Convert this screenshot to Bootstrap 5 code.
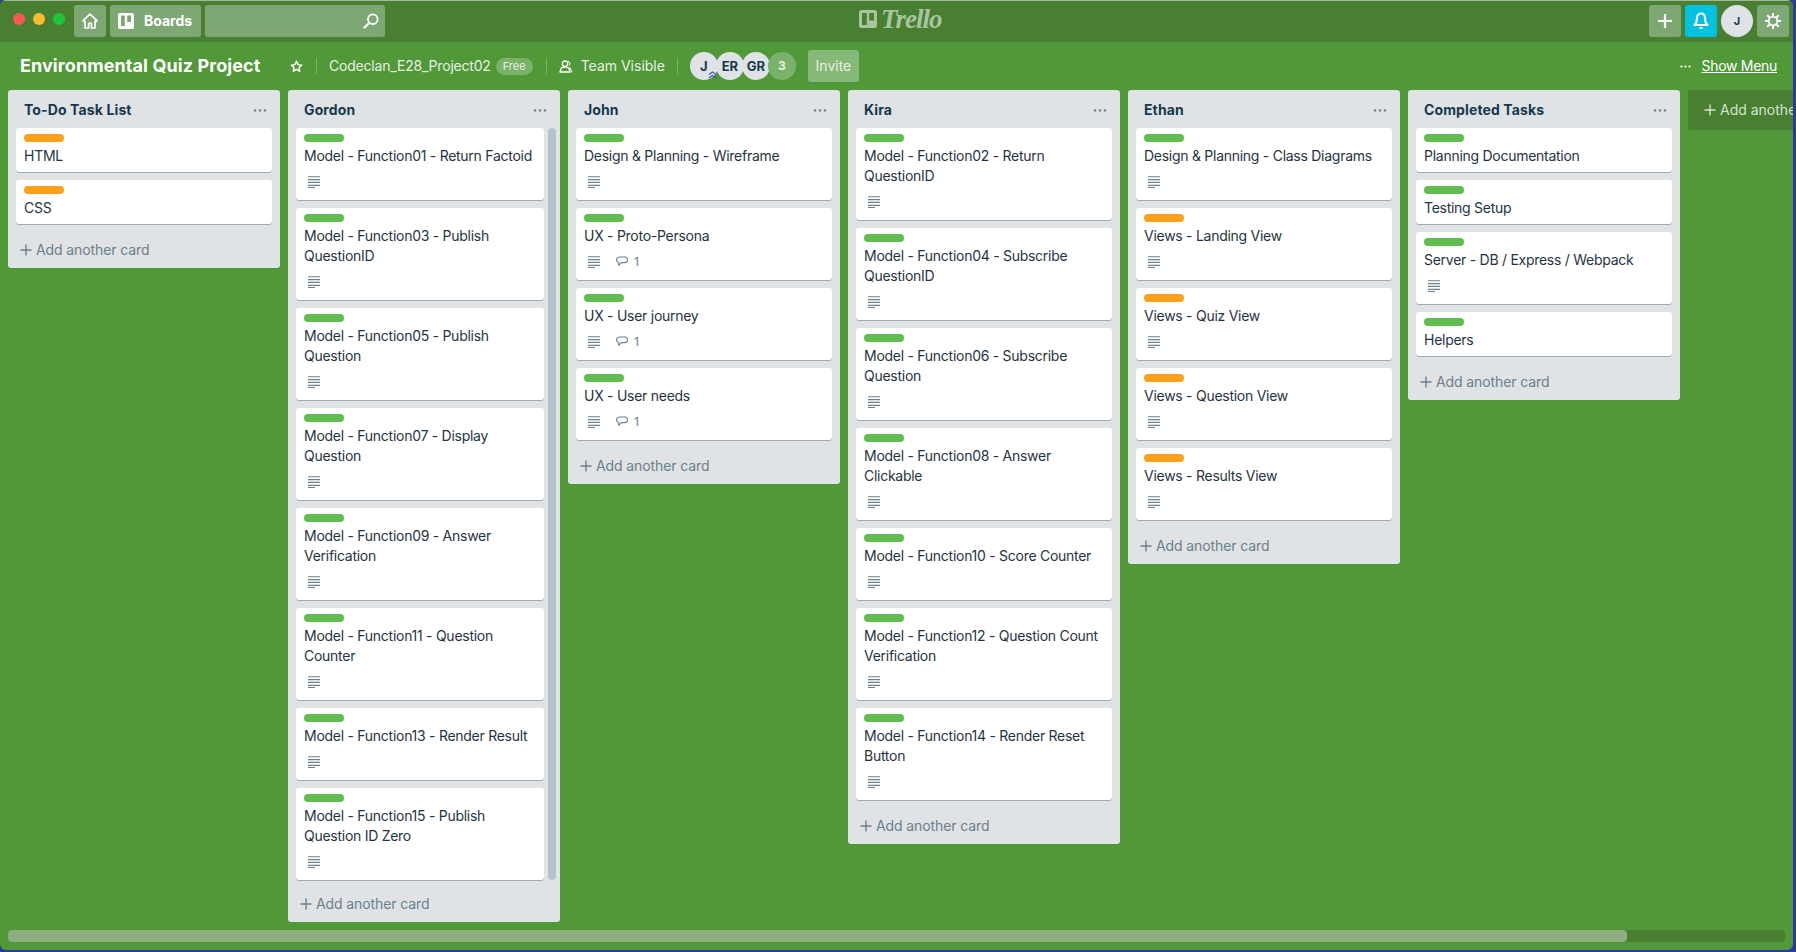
<!DOCTYPE html>
<html lang="en">
<head>
<meta charset="utf-8">
<title>Environmental Quiz Project | Trello</title>
<link href="https://cdn.jsdelivr.net/npm/bootstrap@5.3.0/dist/css/bootstrap.min.css" rel="stylesheet">
<style>
html,body{height:952px;width:1796px;overflow:hidden}
body{background:#2b3a9c;font-family:"Inter","Noto Sans",sans-serif;font-size:14px;line-height:20px;color:#17394d}
svg{display:block;flex:none}
.win{width:1793px;height:950px;background:#519839;border-radius:6px;overflow:hidden}
.topbar{height:42px;background:#487f31;border-top:1px solid #a3b79b;padding:4px 4px 0 13px}
.tdot{width:12px;height:12px;border-radius:50%;margin-right:8px}
.dotrow{height:28px}
.dotred{background:#fc5753}
.dotyellow{background:#fdbc2e}
.dotgreen{background:#1fc43a;margin-right:9px}
.topbtn{height:32px;min-width:32px;background:#7ea873;border:0;border-radius:3px;padding:0;color:#fff;font-weight:700;font-size:14px;line-height:32px}
.topbtn:hover{background:#7ea873;color:#fff}
.boardsbtn{width:91px;margin-left:4px}
.boardicon{margin-right:10px}
.searchbox{width:180px;margin-left:4px;padding-right:6px}
.logoarea{left:859px;top:7px;color:#a8c5a0}
.logotext{font-family:"Liberation Serif",serif;font-style:italic;font-weight:700;font-size:27px;line-height:22px;margin-left:4px;letter-spacing:-1px}
.bellbtn{background:#00c2e0}
.bellbtn:hover{background:#00c2e0}
.useravatar{width:32px;height:32px;border-radius:50%;background:#dfe3e6;color:#17394d;font-size:11px;font-weight:700;line-height:32px;text-align:center}
.boardhead{height:48px;padding-left:20px;padding-right:16px;color:#fff}
.boardname{font-size:18px;font-weight:700;line-height:24px;width:270px;letter-spacing:.08px}
.hsep{width:1px;height:16px;background:rgba(255,255,255,.24);margin:0 12px}
.hsep-a{margin-left:13px}
.hsep-b{margin-left:13px;margin-right:12px}
.htext{color:#e6f0e2}
.hcode{letter-spacing:-.2px}
.hteam{margin-left:8px}
.freepill{background:#7ab26a;border-radius:9px;font-size:11px;line-height:17px;height:17px;padding:0 7px;margin-left:5px;color:#e6f0e2}
.face{width:28px;height:28px;border-radius:50%;background:#dfe3e6;color:#17394d;font-weight:700;font-size:13px;line-height:28px;text-align:center;margin-right:-2px}
.facemore{background:#7ab26a;color:#e6f0e2;font-size:12px}
.invitebtn{height:32px;width:51px;background:#86b978;border-radius:3px;line-height:32px;text-align:center;margin-left:14px;color:#e6f0e2}
.showmenu{color:#fff;text-decoration:underline;margin-left:11px;letter-spacing:-.3px}
.canvasrow{height:840px;padding-left:8px;gap:8px;overflow:hidden}
.klist{width:272px;flex:none;background:#dfe3e6;border-radius:3px}
.klisthead{height:38px;padding:2px 13px 0 16px;font-weight:700;color:#17394d;letter-spacing:.12px}
.kcards{padding:0 8px}
.kcards-scroll{padding:0 4px 0 8px;gap:4px}
.kstack{width:248px;flex:none}
.kthumb{width:8px;background:#b6c2cb;border-radius:4px;flex:none}
.kcard{border:0;border-radius:3px;box-shadow:0 1px 0 rgba(9,45,66,.3);padding:6px 8px;margin-bottom:8px;color:#1f3442;letter-spacing:-.27px}
.kcard:last-child{margin-bottom:0}
.lbl{width:40px;height:8px;border-radius:4px;margin-bottom:4px}
.lg{background:#61bd4f}
.lo{background:#ff9f1a}
.kbadges{height:28px;padding:3px 0 0 4px;color:#6b808c;font-size:12px;letter-spacing:0}
.cslot{width:28px;flex:none}
.comcount{margin-left:-2px}
.addcard{height:44px;padding:8px 8px 0 12px;color:#6b808c;letter-spacing:-.1px}
.addcard-tight{height:42px;padding-top:6px}
.addrow{height:36px}
.addlist{width:272px;flex:none;height:40px;background:#487f31;border-radius:3px;color:#d5e3cf;padding-left:16px}
.hscroll{height:12px;margin:0 8px 8px;background:#487f31;border-radius:4px}
.hthumb{width:1619px;height:12px;background:#8dae80;border-radius:4px}
.adminmark{right:1px;bottom:1px}
</style>
</head>
<body>
<svg width="0" height="0" class="position-absolute">
<defs>
<symbol id="i-desc" viewBox="0 0 12 12"><path d="M0 .75h12M0 3.6h12M0 6.45h12M0 9.3h12" stroke="#6b808c" stroke-width="1.2" fill="none"/><path d="M0 11.5h7" stroke="#6b808c" stroke-width="1"/></symbol>
<symbol id="i-com" viewBox="0 0 12 11"><path d="M3.5 1h5.2C10.5 1 11.5 2.2 11.5 3.7S10.5 6.6 8.7 6.6H5.4L2.8 9.4V6.5C1.4 6.3.5 5.2.5 3.8.5 2.2 1.7 1 3.5 1z" stroke="#6b808c" stroke-width="1.1" fill="none" stroke-linejoin="round"/></symbol>
<symbol id="i-plus" viewBox="0 0 12 12"><path d="M6 .5v11M.5 6h11" stroke="currentColor" stroke-width="1.4" fill="none"/></symbol>
<symbol id="i-dots" viewBox="0 0 14 3"><circle cx="2" cy="1.5" r="1.2" fill="#6b808c"/><circle cx="7" cy="1.5" r="1.2" fill="#6b808c"/><circle cx="12" cy="1.5" r="1.2" fill="#6b808c"/></symbol>
</defs>
</svg>
<div class="win d-flex flex-column">
  <div class="topbar d-flex align-items-start position-relative">
    <div class="dotrow d-flex align-items-center"><span class="tdot dotred"></span><span class="tdot dotyellow"></span><span class="tdot dotgreen"></span></div>
    <button class="btn topbtn d-flex align-items-center justify-content-center" aria-label="Home"><svg width="16" height="16" viewBox="0 0 16 16"><path d="M1 7.6 8 1.2l7 6.4-1.1 1.2-.9-.8V15h-3.600v-4.600H6.600V15H3V8L2.100 8.800z" fill="none" stroke="#fff" stroke-width="1.700" stroke-linejoin="round"/></svg></button>
    <button class="btn topbtn boardsbtn d-flex align-items-center justify-content-start ps-2"><svg width="16" height="16" viewBox="0 0 16 16" class="boardicon"><path fill-rule="evenodd" d="M2 0h12a2 2 0 0 1 2 2v12a2 2 0 0 1-2 2H2a2 2 0 0 1-2-2V2a2 2 0 0 1 2-2zm1 2.500v10.500h3.800V2.500zm6.200 0v6.500H13V2.500z" fill="#fff"/></svg>Boards</button>
    <div class="topbtn searchbox d-flex align-items-center justify-content-end"><svg width="16" height="16" viewBox="0 0 16 16"><circle cx="9.800" cy="6.200" r="4.800" fill="none" stroke="#fff" stroke-width="1.800"/><path d="M6.300 9.700 1.500 14.500" stroke="#fff" stroke-width="2.200" stroke-linecap="round"/></svg></div>
    <div class="logoarea position-absolute d-flex align-items-center">
      <svg width="18" height="18" viewBox="0 0 18 18"><path fill-rule="evenodd" d="M2.500 0h13A2.500 2.500 0 0 1 18 2.500v13a2.500 2.500 0 0 1-2.500 2.500h-13A2.500 2.500 0 0 1 0 15.500v-13A2.500 2.500 0 0 1 2.500 0zm.5 3v12h4.800V3zm7.200 0v7.500H15V3z" fill="#a8c5a0"/></svg>
      <span class="logotext">Trello</span>
    </div>
    <div class="ms-auto d-flex gap-1">
      <button class="btn topbtn d-flex align-items-center justify-content-center" aria-label="Add"><svg width="16" height="16" viewBox="0 0 16 16"><path d="M8 1v14M1 8h14" stroke="#fff" stroke-width="2.200"/></svg></button>
      <button class="btn topbtn bellbtn d-flex align-items-center justify-content-center" aria-label="Notifications"><svg width="16" height="18" viewBox="0 0 16 18"><path d="M8 1.500c2.600 0 4 2 4 4.500 0 3.500.8 5.500 2.500 7h-13C3.200 11.500 4 9.500 4 6c0-2.500 1.400-4.500 4-4.500z" fill="none" stroke="#fff" stroke-width="2.100" stroke-linejoin="round"/><path d="M5.800 15.200h4.400a2.200 2 0 0 1-4.400 0z" fill="#fff"/></svg></button>
      <div class="useravatar">J</div>
      <button class="btn topbtn d-flex align-items-center justify-content-center" aria-label="Settings"><svg width="18" height="18" viewBox="0 0 18 18"><circle cx="9" cy="9" r="4.300" fill="none" stroke="#fff" stroke-width="1.700"/><path d="M9 1v3M9 14v3M1 9h3M14 9h3M3.300 3.300l2.200 2.200M12.500 12.500l2.200 2.200M14.700 3.300l-2.200 2.200M5.500 12.500l-2.200 2.200" stroke="#fff" stroke-width="2"/></svg></button>
    </div>
  </div>

  <div class="boardhead d-flex align-items-center">
    <div class="boardname">Environmental Quiz Project</div>
    <svg width="13" height="13" viewBox="0 0 14 14"><path d="M7 1.300 8.700 5l4 .5-3 2.700.8 4L7 10.200 3.500 12.200l.8-4-3-2.700 4-.5z" fill="none" stroke="#fff" stroke-width="1.500" stroke-linejoin="round"/></svg>
    <span class="hsep hsep-a"></span>
    <span class="htext hcode">Codeclan_E28_Project02</span>
    <span class="freepill">Free</span>
    <span class="hsep hsep-b"></span>
    <svg width="14" height="13" viewBox="0 0 14 13"><circle cx="6" cy="3.700" r="2.700" fill="none" stroke="#fff" stroke-width="1.300"/><path d="M1 12l1.200-4c2-1 5.600-1 7.600 0L11 12z" fill="none" stroke="#fff" stroke-width="1.300" stroke-linejoin="round"/><path d="M9 1.200c2 .6 2.400 3 1.200 4.400M11 7.500l2 4.500h-1.500" fill="none" stroke="#fff" stroke-width="1"/></svg>
    <span class="htext hteam">Team Visible</span>
    <span class="hsep"></span>
    <div class="d-flex">
      <div class="face position-relative">J
        <svg class="position-absolute adminmark" width="9" height="8" viewBox="0 0 9 8"><path d="M1 3.500 4.500 1 8 3.500M1 7 4.500 4.500 8 7" fill="none" stroke="#3f4fc0" stroke-width="1.100"/></svg>
      </div>
      <div class="face">ER</div>
      <div class="face">GR</div>
      <div class="face facemore">3</div>
    </div>
    <div class="invitebtn">Invite</div>
    <div class="ms-auto d-flex align-items-center">
      <svg width="11" height="3" viewBox="0 0 11 3"><circle cx="1.500" cy="1.500" r="1.100" fill="#fff"/><circle cx="5.500" cy="1.500" r="1.100" fill="#fff"/><circle cx="9.500" cy="1.500" r="1.100" fill="#fff"/></svg>
      <a href="#" class="showmenu">Show Menu</a>
    </div>
  </div>

  <div class="canvasrow d-flex align-items-start">
    <section class="klist">
      <div class="klisthead d-flex justify-content-between align-items-center"><span>To-Do Task List</span><svg width="14" height="3"><use href="#i-dots"/></svg></div>
      <div class="kcards">
        <div class="card kcard"><div class="lbl lo"></div>HTML</div>
        <div class="card kcard"><div class="lbl lo"></div>CSS</div>
      </div>
      <div class="addcard"><div class="addrow d-flex align-items-center gap-1"><svg width="12" height="12"><use href="#i-plus"/></svg>Add another card</div></div>
    </section>
    <section class="klist">
      <div class="klisthead d-flex justify-content-between align-items-center"><span>Gordon</span><svg width="14" height="3"><use href="#i-dots"/></svg></div>
      <div class="kcards-scroll d-flex">
        <div class="kstack">
          <div class="card kcard"><div class="lbl lg"></div>Model - Function01 - Return Factoid<div class="kbadges d-flex align-items-center"><svg width="12" height="12"><use href="#i-desc"/></svg></div></div>
          <div class="card kcard"><div class="lbl lg"></div>Model - Function03 - Publish QuestionID<div class="kbadges d-flex align-items-center"><svg width="12" height="12"><use href="#i-desc"/></svg></div></div>
          <div class="card kcard"><div class="lbl lg"></div>Model - Function05 - Publish Question<div class="kbadges d-flex align-items-center"><svg width="12" height="12"><use href="#i-desc"/></svg></div></div>
          <div class="card kcard"><div class="lbl lg"></div>Model - Function07 - Display Question<div class="kbadges d-flex align-items-center"><svg width="12" height="12"><use href="#i-desc"/></svg></div></div>
          <div class="card kcard"><div class="lbl lg"></div>Model - Function09 - Answer Verification<div class="kbadges d-flex align-items-center"><svg width="12" height="12"><use href="#i-desc"/></svg></div></div>
          <div class="card kcard"><div class="lbl lg"></div>Model - Function11 - Question Counter<div class="kbadges d-flex align-items-center"><svg width="12" height="12"><use href="#i-desc"/></svg></div></div>
          <div class="card kcard"><div class="lbl lg"></div>Model - Function13 - Render Result<div class="kbadges d-flex align-items-center"><svg width="12" height="12"><use href="#i-desc"/></svg></div></div>
          <div class="card kcard"><div class="lbl lg"></div>Model - Function15 - Publish Question ID Zero<div class="kbadges d-flex align-items-center"><svg width="12" height="12"><use href="#i-desc"/></svg></div></div>
        </div>
        <div class="kthumb"></div>
      </div>
      <div class="addcard addcard-tight"><div class="addrow d-flex align-items-center gap-1"><svg width="12" height="12"><use href="#i-plus"/></svg>Add another card</div></div>
    </section>
    <section class="klist">
      <div class="klisthead d-flex justify-content-between align-items-center"><span>John</span><svg width="14" height="3"><use href="#i-dots"/></svg></div>
      <div class="kcards">
        <div class="card kcard"><div class="lbl lg"></div>Design &amp; Planning - Wireframe<div class="kbadges d-flex align-items-center"><svg width="12" height="12"><use href="#i-desc"/></svg></div></div>
        <div class="card kcard"><div class="lbl lg"></div>UX - Proto-Persona<div class="kbadges d-flex align-items-center"><span class="cslot"><svg width="12" height="12"><use href="#i-desc"/></svg></span><svg width="12" height="11" class="me-2"><use href="#i-com"/></svg><span class="comcount">1</span></div></div>
        <div class="card kcard"><div class="lbl lg"></div>UX - User journey<div class="kbadges d-flex align-items-center"><span class="cslot"><svg width="12" height="12"><use href="#i-desc"/></svg></span><svg width="12" height="11" class="me-2"><use href="#i-com"/></svg><span class="comcount">1</span></div></div>
        <div class="card kcard"><div class="lbl lg"></div>UX - User needs<div class="kbadges d-flex align-items-center"><span class="cslot"><svg width="12" height="12"><use href="#i-desc"/></svg></span><svg width="12" height="11" class="me-2"><use href="#i-com"/></svg><span class="comcount">1</span></div></div>
      </div>
      <div class="addcard"><div class="addrow d-flex align-items-center gap-1"><svg width="12" height="12"><use href="#i-plus"/></svg>Add another card</div></div>
    </section>
    <section class="klist">
      <div class="klisthead d-flex justify-content-between align-items-center"><span>Kira</span><svg width="14" height="3"><use href="#i-dots"/></svg></div>
      <div class="kcards">
        <div class="card kcard"><div class="lbl lg"></div>Model - Function02 - Return QuestionID<div class="kbadges d-flex align-items-center"><svg width="12" height="12"><use href="#i-desc"/></svg></div></div>
        <div class="card kcard"><div class="lbl lg"></div>Model - Function04 - Subscribe QuestionID<div class="kbadges d-flex align-items-center"><svg width="12" height="12"><use href="#i-desc"/></svg></div></div>
        <div class="card kcard"><div class="lbl lg"></div>Model - Function06 - Subscribe Question<div class="kbadges d-flex align-items-center"><svg width="12" height="12"><use href="#i-desc"/></svg></div></div>
        <div class="card kcard"><div class="lbl lg"></div>Model - Function08 - Answer Clickable<div class="kbadges d-flex align-items-center"><svg width="12" height="12"><use href="#i-desc"/></svg></div></div>
        <div class="card kcard"><div class="lbl lg"></div>Model - Function10 - Score Counter<div class="kbadges d-flex align-items-center"><svg width="12" height="12"><use href="#i-desc"/></svg></div></div>
        <div class="card kcard"><div class="lbl lg"></div>Model - Function12 - Question Count Verification<div class="kbadges d-flex align-items-center"><svg width="12" height="12"><use href="#i-desc"/></svg></div></div>
        <div class="card kcard"><div class="lbl lg"></div>Model - Function14 - Render Reset Button<div class="kbadges d-flex align-items-center"><svg width="12" height="12"><use href="#i-desc"/></svg></div></div>
      </div>
      <div class="addcard"><div class="addrow d-flex align-items-center gap-1"><svg width="12" height="12"><use href="#i-plus"/></svg>Add another card</div></div>
    </section>
    <section class="klist">
      <div class="klisthead d-flex justify-content-between align-items-center"><span>Ethan</span><svg width="14" height="3"><use href="#i-dots"/></svg></div>
      <div class="kcards">
        <div class="card kcard"><div class="lbl lg"></div>Design &amp; Planning - Class Diagrams<div class="kbadges d-flex align-items-center"><svg width="12" height="12"><use href="#i-desc"/></svg></div></div>
        <div class="card kcard"><div class="lbl lo"></div>Views - Landing View<div class="kbadges d-flex align-items-center"><svg width="12" height="12"><use href="#i-desc"/></svg></div></div>
        <div class="card kcard"><div class="lbl lo"></div>Views - Quiz View<div class="kbadges d-flex align-items-center"><svg width="12" height="12"><use href="#i-desc"/></svg></div></div>
        <div class="card kcard"><div class="lbl lo"></div>Views - Question View<div class="kbadges d-flex align-items-center"><svg width="12" height="12"><use href="#i-desc"/></svg></div></div>
        <div class="card kcard"><div class="lbl lo"></div>Views - Results View<div class="kbadges d-flex align-items-center"><svg width="12" height="12"><use href="#i-desc"/></svg></div></div>
      </div>
      <div class="addcard"><div class="addrow d-flex align-items-center gap-1"><svg width="12" height="12"><use href="#i-plus"/></svg>Add another card</div></div>
    </section>
    <section class="klist">
      <div class="klisthead d-flex justify-content-between align-items-center"><span>Completed Tasks</span><svg width="14" height="3"><use href="#i-dots"/></svg></div>
      <div class="kcards">
        <div class="card kcard"><div class="lbl lg"></div>Planning Documentation</div>
        <div class="card kcard"><div class="lbl lg"></div>Testing Setup</div>
        <div class="card kcard"><div class="lbl lg"></div>Server - DB / Express / Webpack<div class="kbadges d-flex align-items-center"><svg width="12" height="12"><use href="#i-desc"/></svg></div></div>
        <div class="card kcard"><div class="lbl lg"></div>Helpers</div>
      </div>
      <div class="addcard"><div class="addrow d-flex align-items-center gap-1"><svg width="12" height="12"><use href="#i-plus"/></svg>Add another card</div></div>
    </section>
    <div class="addlist d-flex align-items-center gap-1"><svg width="12" height="12"><use href="#i-plus"/></svg><span class="text-nowrap">Add another list</span></div>
  </div>

  <div class="hscroll"><div class="hthumb"></div></div>
</div>
<script src="https://cdn.jsdelivr.net/npm/bootstrap@5.3.0/dist/js/bootstrap.bundle.min.js"></script>
</body>
</html>
